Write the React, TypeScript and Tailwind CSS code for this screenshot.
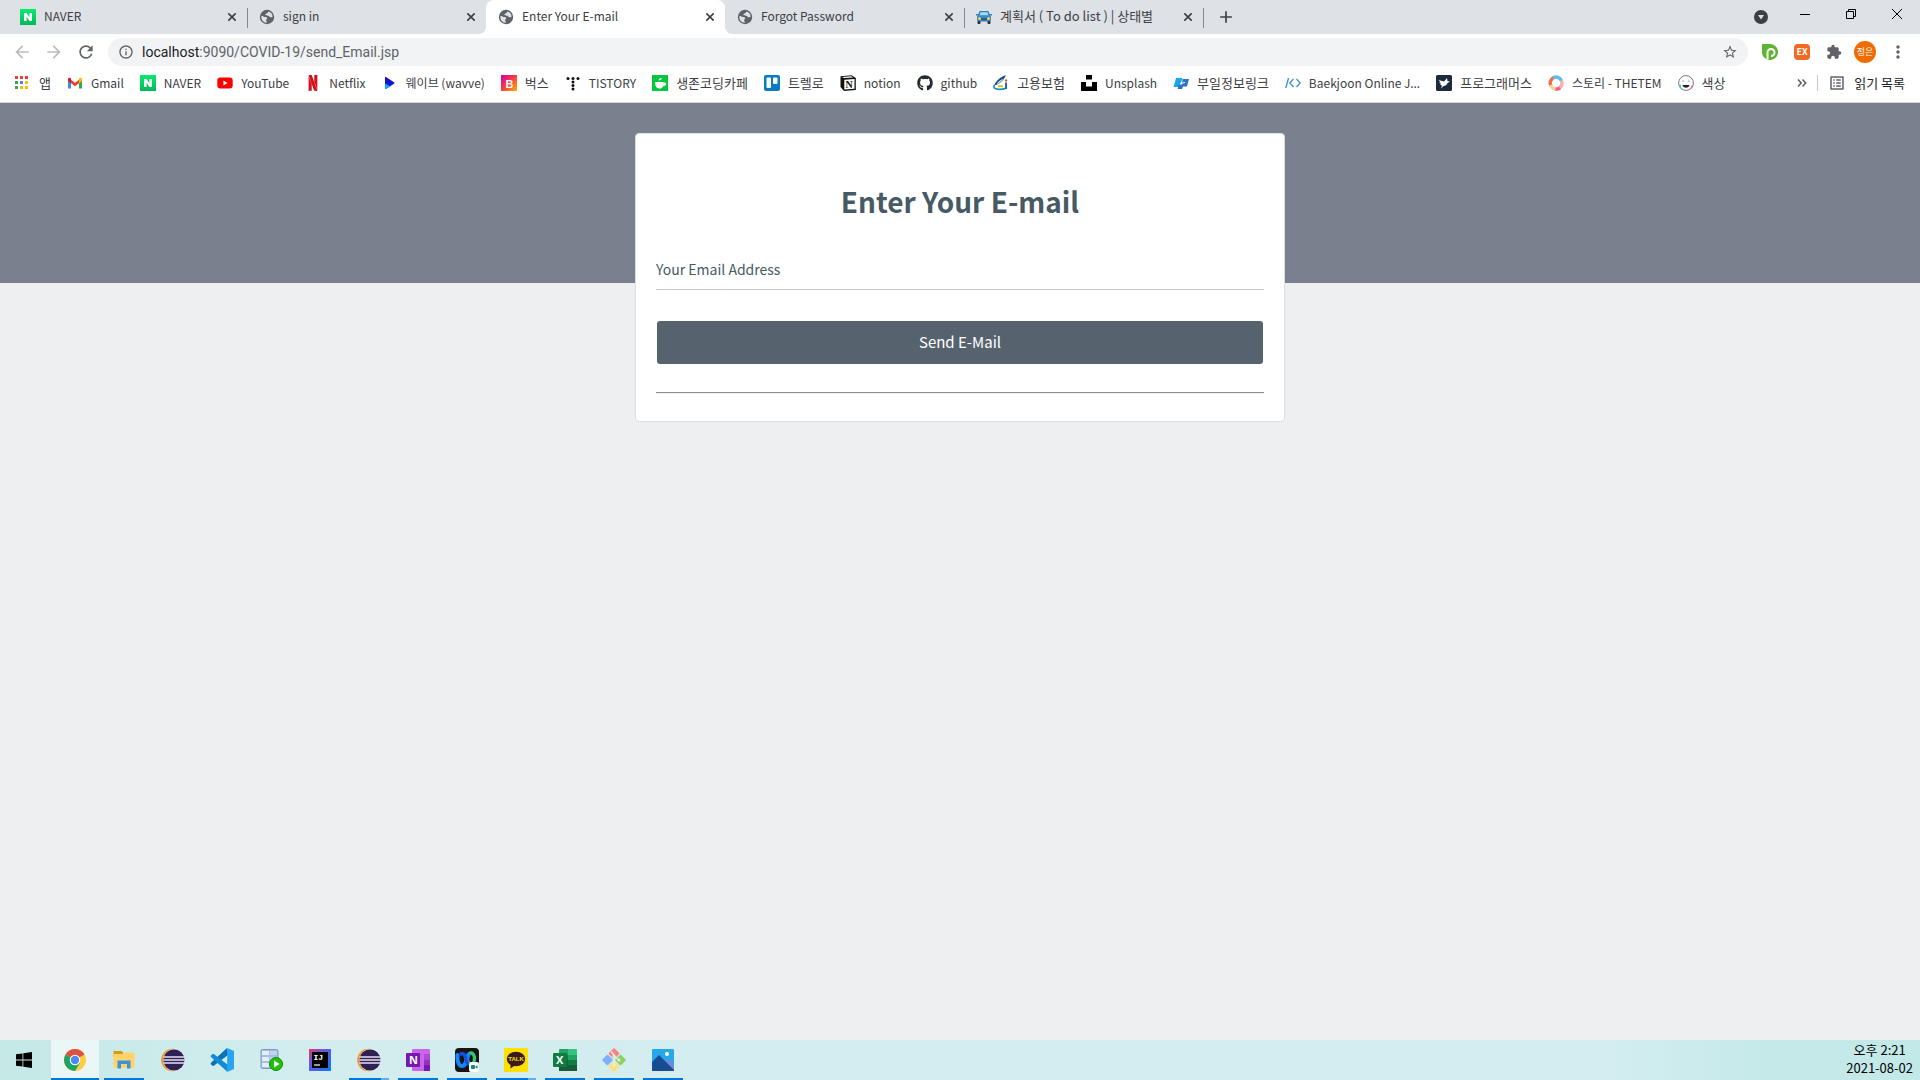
import React from "react";
import { FaGithub } from "react-icons/fa";
import { SiNetflix, SiNaver } from "react-icons/si";
import { MdRefresh, MdStarBorder, MdExtension, MdMoreVert, MdArrowBack, MdArrowForward, MdInfoOutline, MdAdd, MdOutlineListAlt } from "react-icons/md";

const box = "size-4 shrink-0";

const Naver = () => (
  <span className="flex size-4 shrink-0 items-center justify-center bg-gradient-to-b from-[#04ee6c] to-[#03b85c]">
    <SiNaver className="size-2 text-white" />
  </span>
);
const Globe = () => (
  <svg viewBox="0 0 16 16" className={box}>
    <circle cx="8" cy="8" r="7.200" fill="#5f6368" />
    <path d="M2.400 7.200c1.200-.6 2 .5 3.200.7s2.400.1 2.600 1.100-1.300 1.200-1 2.400.9 1.500.4 2.300C4.400 13.500 2 11 2.400 7.200z" fill="#dee1e6" />
    <path d="M9.300 2.500c-.3 1-.5 1.500-1.700 1.900s-1.500.7-1 1.500c.6.900 1.900.4 2.900.8s.9 1.500 2.100 1.600 1.500-.2 2-.5C13.500 5 12 3 9.300 2.500z" fill="#dee1e6" />
  </svg>
);
const Car = () => (
  <svg viewBox="0 0 16 16" className={box}>
    <path d="M3.500 2h9l1.700 5H1.800z" fill="#2f7fc4" />
    <path d="M4.500 3.200h7l1 3.300h-9z" fill="#a9d7f5" />
    <rect x="0" y="5" width="3" height="1.500" fill="#2f7fc4" /><rect x="13" y="5" width="3" height="1.500" fill="#2f7fc4" />
    <rect x="1" y="6.500" width="14" height="6" rx="1.500" fill="#3b88c3" />
    <rect x="1.500" y="12" width="3" height="3" rx="1" fill="#292f33" /><rect x="11.500" y="12" width="3" height="3" rx="1" fill="#292f33" />
    <rect x="5" y="9" width="6" height="2.500" fill="#226699" />
    <circle cx="3.500" cy="9.500" r="1.500" fill="#ffcc4d" /><circle cx="12.500" cy="9.500" r="1.500" fill="#ffcc4d" />
  </svg>
);
const Apps = () => (
  <svg viewBox="0 0 16 16" className={box}>
    {["#ea4335", "#ea4335", "#ea4335", "#34a853", "#4285f4", "#fbbc04", "#34a853", "#fbbc04", "#fbbc04"].map((c, i) => (
      <rect key={i} x={(i % 3) * 5} y={1 + Math.floor(i / 3) * 5} width="3" height="3" fill={c} />
    ))}
  </svg>
);
const Gmail = () => (
  <svg viewBox="0 0 16 16" className={box}>
    <path d="M1 4v9.500h3V6.800z" fill="#4285f4" /><path d="M15 4v9.500h-3V6.800z" fill="#34a853" />
    <path d="M4 4.800l4 3 4-3v3.500l-4 3-4-3z" fill="#ea4335" />
    <path d="M1 6V4.200C1 2.600 2.600 2.300 3.500 3L4 3.400v4.900z" fill="#c5221f" /><path d="M12 3.400l.5-.4c1-.7 2.500-.3 2.500 1.200V6l-3 2.300z" fill="#fbbc04" />
  </svg>
);
const YouTube = () => (
  <svg viewBox="0 0 16 16" className={box}>
    <rect x="0.300" y="2.500" width="15.400" height="11" rx="3" fill="#f00" /><path d="M6.400 5.600v4.800L10.500 8z" fill="#fff" />
  </svg>
);
const Netflix = () => <SiNetflix className="size-4 shrink-0 text-[#d4101c]" />;
const Wavve = () => (
  <svg viewBox="0 0 16 16" className={box}>
    <path d="M3 2.500c0-.6.500-.8 1-.5l8 5.200c.6.400.6 1.100 0 1.500l-8 5.200c-.5.300-1 .1-1-.5z" fill="#1414d2" />
    <path d="M3 8.500l5 2.700-4 2.700c-.5.300-1 .1-1-.5z" fill="#13a6ff" />
  </svg>
);
const Bugs = () => (
  <svg viewBox="0 0 16 16" className={box}>
    <defs><linearGradient id="bugs" x1="0" y1="0" x2="1" y2="1"><stop offset="0" stopColor="#c800b4" /><stop offset=".5" stopColor="#ff3c3c" /><stop offset="1" stopColor="#ffb400" /></linearGradient></defs>
    <rect width="16" height="16" fill="url(#bugs)" />
    <text x="4.500" y="12.500" fontSize="11" fontWeight="700" fill="#fff" fontFamily="Liberation Sans, sans-serif">B</text>
  </svg>
);
const Tistory = () => (
  <svg viewBox="0 0 16 16" className={box}>
    {[[3, 3.500], [8, 3.500], [13, 3.500], [8, 7], [8, 10.500], [8, 14]].map(([x, y]) => <circle key={`${x}-${y}`} cx={x} cy={y} r="1.500" fill="#111" />)}
  </svg>
);
const Cafe = () => (
  <svg viewBox="0 0 16 16" className={box}>
    <rect width="16" height="16" fill="#03c73c" />
    <path d="M3 7h8.500v.8c2-.6 3 .4 2.500 1.700s-1.600 1.700-2.800 1.500C10.500 13 9.500 13.500 7.300 13.500 4 13.500 3 10 3 7z" fill="#fff" />
    <path d="M6.500 5.500c0-1.700 1.200-2.500 3.200-2.500C9.700 4.700 8.500 5.500 6.500 5.500z" fill="#fff" />
  </svg>
);
const Trello = () => (
  <svg viewBox="0 0 16 16" className={box}>
    <rect width="16" height="16" rx="2" fill="#0a7cc4" /><rect x="2.500" y="2.500" width="4.500" height="10.500" rx="1" fill="#fff" /><rect x="9" y="2.500" width="4.500" height="6.500" rx="1" fill="#fff" />
  </svg>
);
const Notion = () => (
  <svg viewBox="0 0 16 16" className={box}>
    <path d="M.5 1.200L11.500.2 15.800 3V15L4 16 .5 12z" fill="#111" />
    <path d="M4.300 4.700l10.200-.6v9.600l-10.200.7z" fill="#fff" /><path d="M2 1.900l9.200-.7 1.900 1.300-9 .6z" fill="#fff" />
    <text x="5.500" y="13" fontSize="10" fontWeight="700" fill="#111" fontFamily="Liberation Serif, serif">N</text>
  </svg>
);
const Github = () => <FaGithub className="size-4 shrink-0 text-[#24292e]" />;
const Employ = () => (
  <svg viewBox="0 0 16 16" className={box} fill="none">
    <path d="M12.800.3C8 1.500 3 6 1 10.300l2.700-.5C7 8.200 11.500 4.500 12.800.3z" fill="#164a86" />
    <path d="M10.500 3.500C8 6.500 5.500 8.500 3.500 9.300 5.500 6.500 8 4.500 10.500 3.500z" fill="#fff" />
    <path d="M1.300 10c-1 2.600.4 4 3 4.200 2.500.2 5.500 0 8-.6" stroke="#1f8fbe" strokeWidth="1.700" /><path d="M5 11.300h5" stroke="#c5c800" strokeWidth="1.800" />
    <path d="M13 7.500v6.500" stroke="#2368b0" strokeWidth="2" /><circle cx="13" cy="5.500" r="1.200" fill="#e85b25" />
  </svg>
);
const Unsplash = () => (
  <svg viewBox="0 0 16 16" className={box}><path d="M5 0h6v4.500H5zM0 7h5v4.500h6V7h5v9H0z" fill="#000" /></svg>
);
const Buil = () => (
  <svg viewBox="0 0 16 16" className={box}>
    <path d="M3 3h6.500L8 7.500 6 12H.5L2 7z" fill="#19a5ef" /><path d="M9.500 4H16l-2 7.500h-4L9 14H4.500L6 9.500h3z" fill="#2f73c4" /><path d="M7 8.500l5-1" stroke="#fff" />
  </svg>
);
const Baekjoon = () => (
  <svg viewBox="0 0 16 16" className={box} fill="none" stroke="#3f90cf" strokeWidth="1.300"><path d="M3.500 3L.8 13M8.500 4L4.800 8l3.700 4M11.500 4l3.700 4-3.700 4" /></svg>
);
const Programmers = () => (
  <svg viewBox="0 0 16 16" className={box}>
    <rect width="16" height="16" rx="1.500" fill="#1e2a3e" /><path d="M2.500 5l5.500 1.500L11 3l.5 3 2.500.5-2.500 1.500C11 10 9 11 7.500 11L5 13.500 6 10.500 4 9.500l1-.8-2-1.200 1.500-.3z" fill="#fff" />
  </svg>
);
const Story = () => (
  <svg viewBox="0 0 16 16" className={box} fill="none" strokeWidth="3.400">
    <path d="M3 11A6 6 0 0 1 6 2.500" stroke="#f4694d" /><path d="M5 2.800a6 6 0 0 1 8.500 3" stroke="#59bdf0" /><path d="M13.500 5.800a6 6 0 0 1-2 7" stroke="#f9afa5" /><path d="M12 12.800a6 6 0 0 1-5 1" stroke="#f45d86" /><path d="M7.500 13.800A6 6 0 0 1 2.500 10" stroke="#ffd08a" />
  </svg>
);
const Colors = () => (
  <svg viewBox="0 0 16 16" className={box}>
    <circle cx="8" cy="8" r="7.400" fill="#fff" stroke="#777" />
    <path d="M1.500 10.500l1.500 3M2.300 9.500v3" stroke="#29c3d6" /><path d="M14.500 10.500l-1.500 3" stroke="#ef5b9c" strokeWidth="1.500" />
    <path d="M4 6.500c.5-1 1.500-1 2 0M10 6.500c.5-1 1.500-1 2 0" fill="none" stroke="#999" /><path d="M4.500 10h7c-.5 3.500-6.500 3.500-7 0z" fill="#222" />
  </svg>
);

const bookmarks: { name: string; Icon: () => React.JSX.Element; latin?: boolean }[] = [
  { name: "앱", Icon: Apps },
  { name: "Gmail", Icon: Gmail, latin: true },
  { name: "NAVER", Icon: Naver, latin: true },
  { name: "YouTube", Icon: YouTube, latin: true },
  { name: "Netflix", Icon: Netflix, latin: true },
  { name: "웨이브 (wavve)", Icon: Wavve, latin: true },
  { name: "벅스", Icon: Bugs },
  { name: "TISTORY", Icon: Tistory, latin: true },
  { name: "생존코딩카페", Icon: Cafe },
  { name: "트렐로", Icon: Trello },
  { name: "notion", Icon: Notion, latin: true },
  { name: "github", Icon: Github, latin: true },
  { name: "고용보험", Icon: Employ },
  { name: "Unsplash", Icon: Unsplash, latin: true },
  { name: "부일정보링크", Icon: Buil },
  { name: "Baekjoon Online J...", Icon: Baekjoon, latin: true },
  { name: "프로그래머스", Icon: Programmers },
  { name: "스토리 - THETEM", Icon: Story, latin: true },
  { name: "색상", Icon: Colors },
];

const tabs: { title: string; Icon: () => React.JSX.Element; active?: boolean; rule?: boolean; korean?: boolean }[] = [
  { title: "NAVER", Icon: Naver, rule: true },
  { title: "sign in", Icon: Globe },
  { title: "Enter Your E-mail", Icon: Globe, active: true },
  { title: "Forgot Password", Icon: Globe, rule: true },
  { title: "계획서 ( To do list ) | 상태별", Icon: Car, rule: true, korean: true },
];

function TabStrip() {
  return (
    <div className="flex h-[34px] bg-[#dee1e6] pl-2">
      <div role="tablist" className="flex">
        {tabs.map(({ title, Icon, active, rule, korean }) => (
          <div key={title} className={active ? "relative flex w-[239px] items-center rounded-t-lg bg-white pr-[7px] pl-3" : "relative flex w-[239px] items-center pr-[7px] pl-3"}>
            {active && (
              <>
                <span className="absolute bottom-0 -left-2 size-2 bg-[radial-gradient(circle_at_0_0,#dee1e6_8px,#fff_8px)]" />
                <span className="absolute -right-2 bottom-0 size-2 bg-[radial-gradient(circle_at_100%_0,#dee1e6_8px,#fff_8px)]" />
              </>
            )}
            <button role="tab" aria-selected={!!active} className="flex min-w-0 flex-1 items-center gap-2 text-left">
              <Icon />
              <span className={korean ? "truncate pb-0.5 text-[13px]" : "truncate pb-0.5 text-xs"}>{title}</span>
            </button>
            <button aria-label={`Close ${title}`} className="flex size-4 items-center justify-center">
              <svg viewBox="0 0 8 8" className="size-2" stroke="#3c4043" strokeWidth="1.600"><path d="M.3.300l7.400 7.400M7.700.300L.3 7.700" /></svg>
            </button>
            {rule && <span className="absolute top-2 -right-px h-5 w-px bg-[#85888d]" />}
          </div>
        ))}
      </div>
      <button aria-label="New tab" className="flex w-[46px] items-center justify-center"><MdAdd className="size-5 text-[#3c4043]" /></button>
      <div className="ml-auto flex items-center">
        <button aria-label="Search tabs" className="mr-3.5 flex size-3.5 items-center justify-center rounded-full bg-[#3c4043]">
          <svg viewBox="0 0 8 8" className="size-2"><path d="M1 2h6L4 6.500z" fill="#dee1e6" /></svg>
        </button>
        {[["Minimize", "M0 5.500h10"], ["Restore", "M.5 2.500h7v7h-7zM2.500 2.500v-2h7v7h-2"], ["Close", "M0 0l10 10M10 0L0 10"]].map(([name, d]) => (
          <button key={name} aria-label={name} className="flex h-7 w-[46px] items-center justify-center self-start">
            <svg viewBox="0 0 10 10" className="size-2.5 overflow-visible" fill="none" stroke="#000"><path d={d} /></svg>
          </button>
        ))}
      </div>
    </div>
  );
}

function Toolbar() {
  return (
    <div className="flex h-9 items-center bg-white px-3">
      <div className="flex gap-3 text-[#5f6368]">
        <button aria-label="Back" className="text-[#babcbe]"><MdArrowBack className="size-5" /></button>
        <button aria-label="Forward" className="text-[#babcbe]"><MdArrowForward className="size-5" /></button>
        <button aria-label="Reload"><MdRefresh className="size-5" /></button>
      </div>
      <div className="ml-3 flex h-7 flex-1 items-center rounded-full bg-[#f1f3f4] px-2.5 text-[#5f6368]">
        <MdInfoOutline className="size-4" />
        <div className="ml-2 flex-1 font-[Roboto,sans-serif] text-sm" role="textbox" aria-label="Address"><span className="text-[#202124]">localhost</span>:9090/COVID-19/send_Email.jsp</div>
        <button aria-label="Bookmark this page"><MdStarBorder className="size-4" /></button>
      </div>
      <div className="ml-3.5 flex items-center gap-4">
        <button aria-label="P extension">
          <svg viewBox="0 0 16 16" className={box}><path d="M0 0h8a8 8 0 1 1-5.500 13.800C.5 12 0 10 0 8z" fill="#5cb531" /><path d="M5.500 15.500V8.500a3.500 3.500 0 1 1 3.500 3.500" fill="none" stroke="#fff" strokeWidth="2" /></svg>
        </button>
        <button aria-label="EX extension" className="flex size-4 items-center justify-center rounded-sm bg-[#f26a21] text-[9px] font-bold text-white">EX</button>
        <button aria-label="Extensions"><MdExtension className="size-4 text-[#5f6368]" /></button>
        <div className="flex items-center gap-3">
          <button aria-label="Profile" className="-ml-1 flex size-[22px] items-center justify-center rounded-full bg-[#ef6c00] text-[9px] text-white">정은</button>
          <button aria-label="Menu"><MdMoreVert className="size-5 text-[#5f6368]" /></button>
        </div>
      </div>
    </div>
  );
}

function BookmarksBar() {
  return (
    <nav className="flex h-[33px] items-center border-b border-[#d4d6da] bg-white px-[15px] pb-1.5">
      <div className="flex gap-4">
        {bookmarks.map(({ name, Icon, latin }) => (
          <a key={name} href="#" className={latin ? "flex items-center gap-2 text-xs leading-5 whitespace-nowrap" : "flex items-center gap-2 text-[13px] leading-5 whitespace-nowrap"}><Icon />{name}</a>
        ))}
      </div>
      <button aria-label="More bookmarks" className="ml-auto">
        <svg viewBox="0 0 10 10" className="size-2.5" fill="none" stroke="#5f6368" strokeWidth="1.600"><path d="M1 1.500L4.200 5 1 8.500M5.500 1.500L8.700 5 5.500 8.500" /></svg>
      </button>
      <span className="mx-2.5 h-4 w-px bg-[#c6c9cd]" />
      <button className="flex items-center gap-2 whitespace-nowrap text-[#202124]"><MdOutlineListAlt className="size-[18px] text-[#5f6368]" />읽기 목록</button>
    </nav>
  );
}

function EmailPage() {
  return (
    <main className="flex-1 bg-[#eeeff1] bg-[linear-gradient(#7b808e,#7b808e)] bg-[length:100%_180px] bg-no-repeat pt-[30px]">
      <form className="mx-auto flex w-[650px] flex-col rounded border border-[#dddfe0] bg-white px-5 pt-11 pb-[27px]" onSubmit={(e) => e.preventDefault()}>
        <h1 className="text-center text-[28px] leading-[46px] font-bold text-[#455a64]">Enter Your E-mail</h1>
        <input type="email" aria-label="Your Email Address" placeholder="Your Email Address" className="mt-6 h-[42px] w-full border-b border-[#c4c6c8] text-sm text-[#455a64] outline-none placeholder:text-[#455a64]" />
        <button className="mx-px mt-[31px] h-[43px] rounded-[3px] bg-[#57626f] pb-0.5 text-[15px] text-white">Send E-Mail</button>
        <hr className="mt-7 border-t border-b border-t-[#8f8f8f] border-b-[#eeeeee]" />
      </form>
    </main>
  );
}

const tile = "size-6";
const Chrome = () => (
  <svg viewBox="0 0 24 24" className={tile}>
    <circle cx="12" cy="12" r="11" fill="#ffcd40" /><path d="M12 12L2.500 6.500A11 11 0 0 0 12 23l5-8.500z" fill="#1da462" />
    <path d="M12 12L2.500 6.500a11 11 0 0 1 19 0z" fill="#dd5144" /><circle cx="12" cy="12" r="5.300" fill="#fff" /><circle cx="12" cy="12" r="4.200" fill="#4c8bf5" />
  </svg>
);
const Explorer = () => (
  <svg viewBox="0 0 24 24" className={tile}>
    <path d="M1.500 3h8l2 2v4h-10z" fill="#d99a12" /><path d="M1.500 6h9l1.500-1.500h10.500V20h-21z" fill="#ffd367" />
    <path d="M5.500 20.500v-8h13v8H15v-4.500H9v4.500z" fill="#3a94dd" />
  </svg>
);
const Eclipse = () => (
  <svg viewBox="0 0 24 24" className={tile}>
    <circle cx="11.500" cy="12" r="11.300" fill="#f7941e" /><circle cx="13" cy="12" r="11" fill="#fff" opacity=".7" /><circle cx="13" cy="12" r="10.600" fill="#2c2255" />
    <path d="M2.500 9h21M2.300 12h21.500M2.500 15h21" stroke="#e6e0f0" strokeWidth="1.400" />
  </svg>
);
const VSCode = () => (
  <svg viewBox="0 0 24 24" className={tile}>
    <path d="M17 0L1 14.800c-.5.500-.5 1.200 0 1.600l1.300 1.200c.4.400 1 .4 1.500.1L18 7z" fill="#0a73b8" /><path d="M17.500 24L1 9c-.5-.5-.5-1.200 0-1.600l1.300-1.200c.4-.4 1-.4 1.500-.1L18 17z" fill="#138bd4" />
    <path d="M17.200 0L24 3v18l-6.800 3z" fill="#27a4f2" />
  </svg>
);
const SqlDev = () => (
  <svg viewBox="0 0 24 24" className={tile}>
    <rect x="2" y="1.500" width="17" height="19" rx="1.500" fill="#a9bfe2" stroke="#7c98c9" />
    <path d="M3 3h7v4H3zM3 9h7v4H3zM3 15h7v4H3z" fill="#e5edf8" /><path d="M11 3h7v4h-7zM11 9h7v4h-7zM11 15h7v4h-7z" fill="#c4d3ec" />
    <circle cx="17" cy="16" r="6.500" fill="#1fc40a" stroke="#118a04" /><path d="M15 12.500v7l5.500-3.500z" fill="#fff" />
  </svg>
);
const IntelliJ = () => (
  <svg viewBox="0 0 24 24" className={tile}>
    <defs><linearGradient id="ij" x1="0" y1="0" x2="1" y2="1"><stop offset="0" stopColor="#f0306c" /><stop offset=".35" stopColor="#6b57d8" /><stop offset="1" stopColor="#087cfa" /></linearGradient></defs>
    <rect x="1" y="1" width="22" height="22" fill="url(#ij)" /><rect x="4" y="4" width="16" height="16" fill="#000" />
    <text x="5.500" y="12" fontSize="8" fontWeight="700" fill="#fff" fontFamily="Liberation Mono, monospace">IJ</text><path d="M6 17h6" stroke="#fff" strokeWidth="1.200" />
  </svg>
);
const OneNote = () => (
  <svg viewBox="0 0 24 24" className={tile}>
    <rect x="6" y="1" width="18" height="22" rx="1" fill="#ca64ea" /><path d="M18 6h6v6h-6z" fill="#ae4bd5" /><path d="M18 12h6v5h-6z" fill="#9332bf" /><path d="M18 17h6v6h-6z" fill="#7719aa" />
    <rect y="5" width="14" height="14" rx="1" fill="#7719aa" /><text x="3" y="16" fontSize="11" fontWeight="700" fill="#fff" fontFamily="Open Sans, sans-serif">N</text>
  </svg>
);
const Webex = () => (
  <svg viewBox="0 0 24 24" className={tile}>
    <rect width="24" height="24" rx="4" fill="#151515" />
    <ellipse cx="16" cy="10.500" rx="3.500" ry="5.500" fill="none" stroke="#38c86c" strokeWidth="3.400" />
    <path d="M2.500 7c-.5 5.500 1 11 4.500 11 4 0 4.500-7 6.500-11.500" fill="none" stroke="#1686ff" strokeWidth="4" strokeLinecap="round" />
    <path d="M6 6c3-1 4 1 4.700 4.500s1.800 6 4.300 5.500" fill="none" stroke="#1a4fe0" strokeWidth="3.600" strokeLinecap="round" />
    <rect x="14" y="14" width="10" height="10" rx="2" fill="#fff" /><rect x="16" y="17" width="4" height="4" rx="1" fill="#128a78" /><path d="M20.500 18.500l2-1.200v3.400l-2-1.200z" fill="#128a78" />
  </svg>
);
const Talk = () => (
  <svg viewBox="0 0 24 24" className={tile}>
    <rect width="24" height="24" fill="#ffe000" /><ellipse cx="12" cy="11" rx="9.200" ry="7.300" fill="#391b1b" /><path d="M6.500 15v5.500l5-3.500z" fill="#391b1b" />
    <text x="12" y="13" textAnchor="middle" fontSize="6" fontWeight="700" fill="#ffe000" fontFamily="Liberation Sans, sans-serif">TALK</text>
  </svg>
);
const Excel = () => (
  <svg viewBox="0 0 24 24" className={tile}>
    <rect x="6" y="1" width="18" height="22" rx="1" fill="#21a366" /><path d="M15 1h9v6h-9z" fill="#33c481" /><path d="M6 7h9v5H6z" fill="#107c41" /><path d="M15 12h9v5h-9z" fill="#107c41" /><path d="M6 12h9v11H6zM15 17h9v6h-9z" fill="#185c37" />
    <rect y="5" width="14" height="14" rx="1" fill="#107c41" /><text x="3" y="16" fontSize="11" fontWeight="700" fill="#fff" fontFamily="Open Sans, sans-serif">X</text>
  </svg>
);
const Git = () => (
  <svg viewBox="0 0 24 24" className={tile}>
    <rect x="8" y="1.500" width="8" height="8" rx="1" transform="rotate(45 12 5.500)" fill="#fb8080" /><rect x="1.500" y="8" width="8" height="8" rx="1" transform="rotate(45 5.500 12)" fill="#7fb1fb" />
    <rect x="14.500" y="8" width="8" height="8" rx="1" transform="rotate(45 18.500 12)" fill="#8dd163" /><rect x="8" y="14.500" width="8" height="8" rx="1" transform="rotate(45 12 18.500)" fill="#fde07c" />
    <path d="M9 3.500l3 3.500v10M12 8l5 4" fill="none" stroke="#e4edee" strokeWidth="1.500" /><circle cx="12" cy="8" r="1.600" fill="#e4edee" /><circle cx="17" cy="12" r="1.600" fill="#e4edee" /><circle cx="12" cy="17" r="1.600" fill="#e4edee" />
  </svg>
);
const Photos = () => (
  <svg viewBox="0 0 24 24" className={tile}>
    <rect x="1" y="1" width="22" height="22" rx="1" fill="#28a8ea" /><path d="M23 17l-6-6-5 5 7 7h4z" fill="#7a86d8" /><path d="M1 14l7-7 15 15v1H1z" fill="#174b94" /><circle cx="16" cy="6" r="2" fill="#fff" />
  </svg>
);

const apps: { name: string; Icon: () => React.JSX.Element; state?: "active" | "open" | "multi" }[] = [
  { name: "Chrome", Icon: Chrome, state: "active" }, { name: "File Explorer", Icon: Explorer, state: "open" },
  { name: "Eclipse", Icon: Eclipse }, { name: "Visual Studio Code", Icon: VSCode }, { name: "SQL Developer", Icon: SqlDev }, { name: "IntelliJ IDEA", Icon: IntelliJ },
  { name: "Eclipse workspace", Icon: Eclipse, state: "multi" }, { name: "OneNote", Icon: OneNote, state: "open" }, { name: "Webex", Icon: Webex, state: "open" },
  { name: "KakaoTalk", Icon: Talk, state: "multi" }, { name: "Excel", Icon: Excel, state: "open" }, { name: "Git", Icon: Git, state: "open" }, { name: "Photos", Icon: Photos, state: "open" },
];

function Taskbar() {
  return (
    <footer className="flex h-10 bg-[linear-gradient(90deg,#c4e9e7,#d3edef_16%,#d4edf0_50%,#d3edf0_84%,#c5e9e9_92%,#c3e8e8)]">
      <button aria-label="Start" className="mr-[3px] flex w-12 items-center justify-center">
        <svg viewBox="0 0 16 16" className="size-4"><path d="M0 2.300l6.500-.9v6.200H0zM7.300 1.300L16 0v7.600H7.300zM0 8.400h6.500v6.200L0 13.700zM7.300 8.400H16V16l-8.700-1.300z" fill="#000" /></svg>
      </button>
      <div className="flex gap-px">
        {apps.map(({ name, Icon, state }) => (
          <button key={name} aria-label={name} className={state === "active" ? "relative flex w-12 items-center justify-center bg-[#eaf7f6]" : "relative flex w-12 items-center justify-center"}>
            <Icon />
            {state === "active" && <span className="absolute inset-x-0 bottom-0 h-0.5 bg-[#0078d7]" />}
            {state === "open" && <span className="absolute inset-x-1 bottom-0 h-0.5 bg-[#0078d7]" />}
            {state === "multi" && <span className="absolute inset-x-1 bottom-0 h-0.5 border-r-8 border-[#66aee6] bg-[#0078d7]" />}
          </button>
        ))}
      </div>
      <div className="ml-auto flex flex-col items-center justify-center pr-[7px] pb-0.5 text-[13px] leading-[18px] text-black"><span>오후 2:21</span><span>2021-08-02</span></div>
    </footer>
  );
}

export default function App() {
  return (
    <div className="flex min-h-screen flex-col font-['Noto_Sans_CJK_KR',sans-serif] text-[13px] leading-5 text-[#3c4043]">
      <header><TabStrip /><Toolbar /><BookmarksBar /></header>
      <EmailPage />
      <Taskbar />
    </div>
  );
}
